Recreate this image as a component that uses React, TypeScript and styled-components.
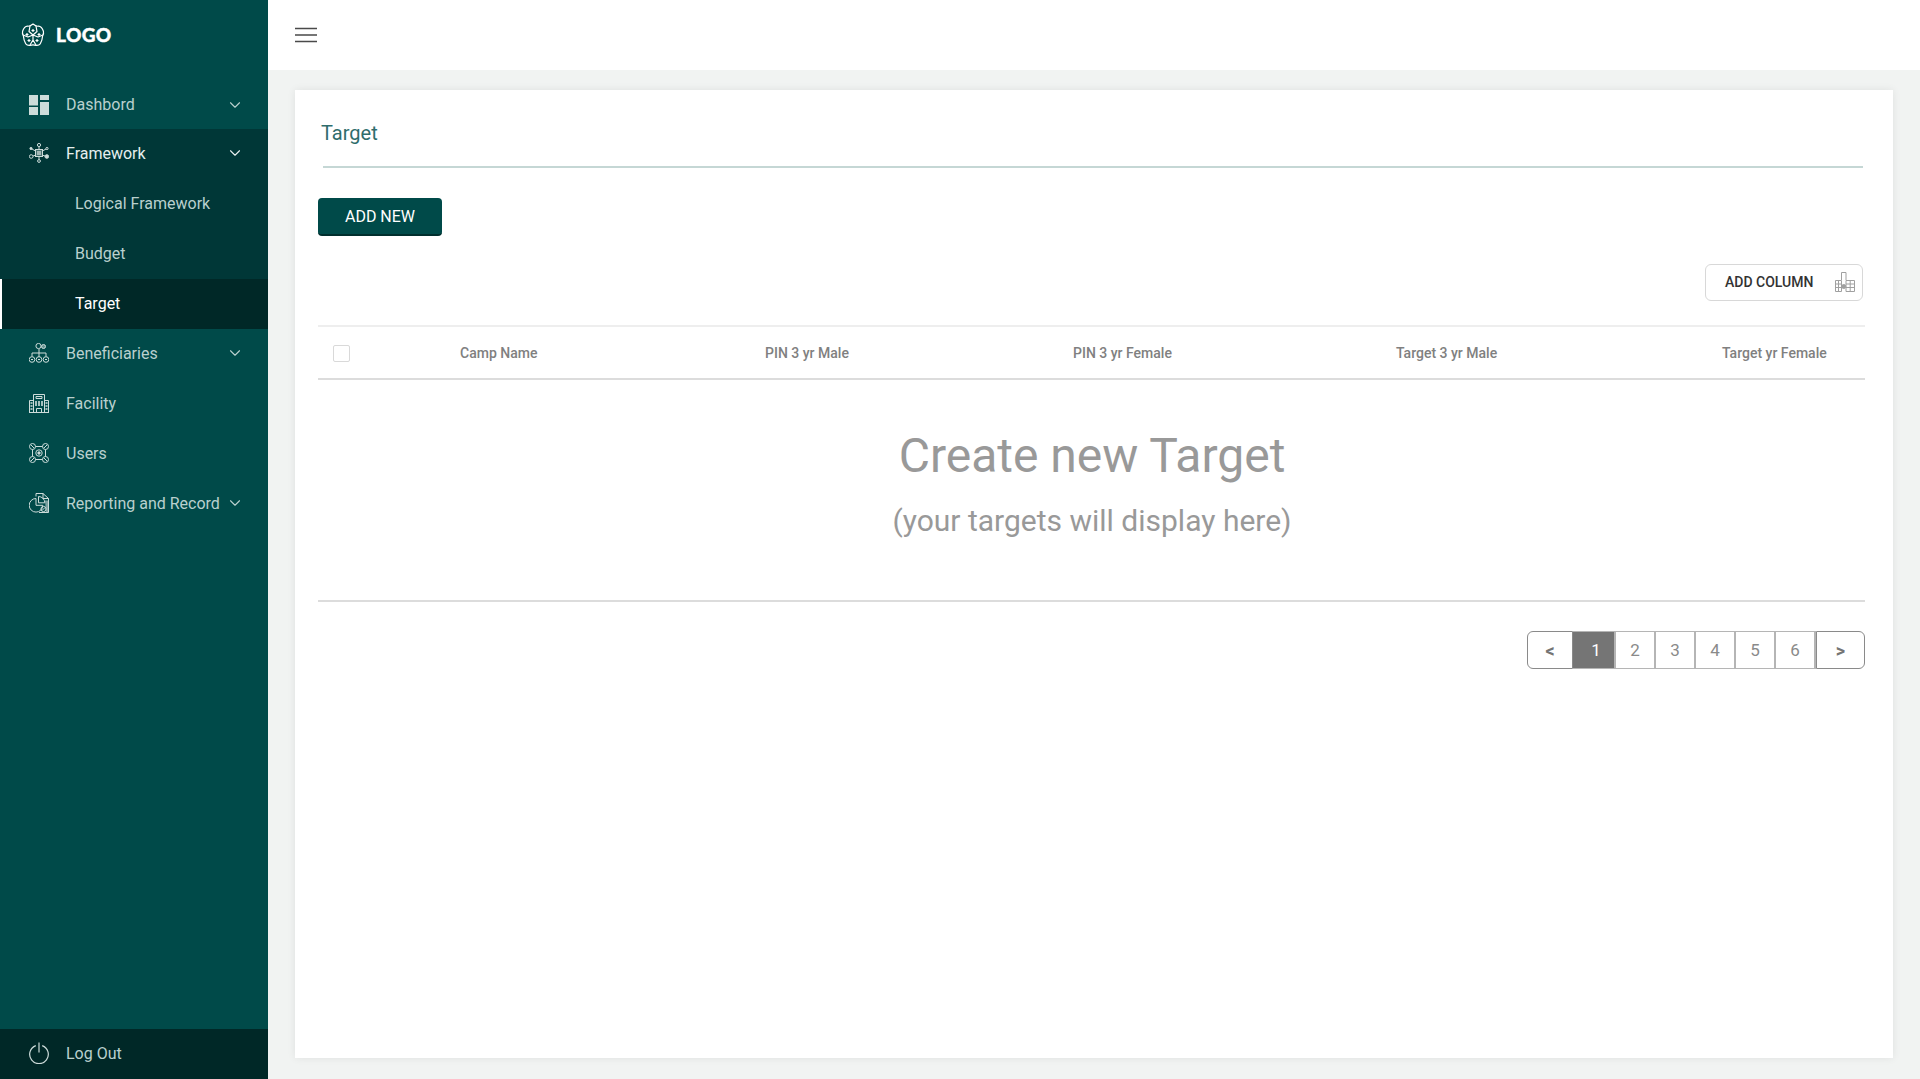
import { ReactNode } from "react";
import styled, { createGlobalStyle } from "styled-components";
import { ChevronDown } from "lucide-react";

const GlobalStyle = createGlobalStyle`
  * {
    box-sizing: border-box;
  }
  html,
  body {
    margin: 0;
    height: 100%;
    background: #f1f3f2;
    font-family: Roboto, "Liberation Sans", sans-serif;
  }
`;

const LogoIcon = () => (
  <svg width="24" height="24" viewBox="0 0 24 24" fill="none" stroke="#fff" strokeWidth="1.2" strokeLinejoin="round">
    <path d="M12 1 Q15 3.6 17.5 3.2 Q20.8 3.4 22.4 8.2 Q23 10.6 21.6 13 Q21.4 16.5 19.4 20.6 Q17.8 22.8 15 22.4 Q12 21.4 9 22.4 Q6.2 22.8 4.6 20.6 Q2.6 16.5 2.4 13 Q1 10.6 1.6 8.2 Q3.2 3.4 6.5 3.2 Q9 3.6 12 1Z" />
    <path d="M12 12 8 8.5 9 3M12 12l4-3.5L15 3M12 12l5 2 5-2M12 12l-5 2-5-2M12 12v5l-3 5M12 17l3 5" />
    <path d="M12 6v3M10.5 7.5h3M6 10v3M4.5 11.5h3M18 10v3M16.5 11.5h3M8 16v3M6.5 17.5h3M16 16v3M14.5 17.5h3" />
  </svg>
);

const HamburgerIcon = () => (
  <svg width="22" height="16" viewBox="0 0 22 16" fill="none" stroke="#4a4a4a" strokeWidth="1.7">
    <path d="M0 1.5h22M0 8h22M0 14.5h22" />
  </svg>
);

const DashboardIcon = () => (
  <svg width="20" height="20" viewBox="0 0 20 20" fill="#cddcda">
    <rect x="0" y="0" width="9" height="10.5" />
    <rect x="0" y="12" width="9" height="8" />
    <rect x="11" y="0" width="9" height="5" />
    <rect x="11" y="7" width="9" height="13" />
  </svg>
);

const FrameworkIcon = () => (
  <svg width="20" height="20" viewBox="0 0 20 20" fill="none" stroke="#cddcda" strokeWidth="1">
    <rect x="6.5" y="6.5" width="7" height="7" fill="#cddcda" fillOpacity=".35" />
    <path d="M8 9h4M8 11h4" strokeWidth="1.2" stroke="#fff" />
    <circle cx="10" cy="2" r="1.6" />
    <circle cx="10" cy="18" r="1.4" />
    <circle cx="2" cy="5.5" r="1.1" fill="#cddcda" />
    <circle cx="18" cy="5.5" r="1.1" />
    <circle cx="2.2" cy="13.5" r="1.8" />
    <circle cx="17.8" cy="13.5" r="1.8" fill="#cddcda" />
    <path d="M10 3.6v3M10 13.5v3M3 6l3.5 2M17 6l-3.5 2M4 13l2.5-.8M16 13l-2.5-.8" />
  </svg>
);

const BeneficiariesIcon = () => (
  <svg width="20" height="20" viewBox="0 0 20 20" fill="none" stroke="#cddcda" strokeWidth="1">
    <circle cx="9.5" cy="3" r="2.6" />
    <circle cx="14.5" cy="3.5" r="2" fill="#cddcda" fillOpacity=".5" />
    <circle cx="3" cy="16.5" r="2.8" />
    <circle cx="10" cy="16.5" r="2.8" />
    <circle cx="17" cy="16.5" r="2.8" />
    <path d="M10 6v8M3 13.5V10h14v3.5M2 16.5h2M9 16.5h2M16 16.5h2" />
  </svg>
);

const FacilityIcon = () => (
  <svg width="20" height="20" viewBox="0 0 20 20" fill="none" stroke="#cddcda" strokeWidth="1">
    <path d="M.5 19.5V7.5h4M19.5 19.5V7.5h-4M4.5 19.5V1.5h11v18M0 19.5h20" />
    <path d="M7 3.5h6v2H7zM7.5 15.5h5v4h-5z" />
    <path d="M7 8v5M10 8v5M13 8v5" strokeWidth="1.6" />
    <path d="M1.5 10h2M1.5 13h2M1.5 16h2M16.5 10h2M16.5 13h2M16.5 16h2" strokeWidth="1.6" />
  </svg>
);

const UsersIcon = () => (
  <svg width="20" height="20" viewBox="0 0 20 20" fill="none" stroke="#cddcda" strokeWidth="1">
    <circle cx="3.5" cy="3.5" r="3" />
    <circle cx="16.5" cy="3.5" r="3" />
    <circle cx="3.5" cy="16.5" r="3" />
    <circle cx="16.5" cy="16.5" r="3" />
    <circle cx="10" cy="10" r="3.2" />
    <circle cx="10" cy="10" r="1.2" fill="#cddcda" />
    <path d="M6.5 3.5h7M6.5 16.5h7M3.5 6.5v7M16.5 6.5v7M2 2l3 3M15 5l3-3M2 18l3-3M15 15l3 3" />
  </svg>
);

const ReportingIcon = () => (
  <svg width="20" height="20" viewBox="0 0 20 20" fill="none" stroke="#cddcda" strokeWidth="1">
    <path d="M7 3.5V.5h7l5.5 5v14H10" />
    <path d="M14 .5v5h5.5" />
    <path d="M16 7.5h3.5v12H17z" fill="#cddcda" fillOpacity=".6" stroke="none" />
    <path d="M7 5.5a6.8 6.8 0 1 0 6.8 6.8H7Z" />
    <path d="M9.5 3.5v6.3h6.3a6.3 6.3 0 0 0-6.3-6.3Z" />
    <circle cx="14.5" cy="16" r="2.6" />
    <path d="M13 17.5l3-3" />
  </svg>
);

const PowerIcon = () => (
  <svg width="20" height="22" viewBox="0 0 20 22" fill="none" stroke="#cddcda" strokeWidth="1.2">
    <path d="M6.8 3.6a9.3 9.3 0 1 0 6.4 0" />
    <path d="M10 0.5v10" />
  </svg>
);

const ColumnIcon = () => (
  <svg width="20" height="20" viewBox="0 0 20 20" fill="none" stroke="#a0a0a0" strokeWidth="1">
    <path d="M.5 8.5h6v11h-6zM.5 12h6M.5 15.5h6M3.5 8.5v11" />
    <path d="M6.5 8V.5h4.5V8" />
    <path d="M11 8.5h8.5v11H11zM11 12h8.5M11 15.5h8.5M15.2 8.5v11" />
    <circle cx="8.7" cy="14.5" r="2" fill="#a0a0a0" />
  </svg>
);

type NavRowProps = {
  icon: ReactNode;
  label: string;
  open?: boolean;
  hasChildren?: boolean;
};

const NavRow = ({ icon, label, open, hasChildren }: NavRowProps) => (
  <Row $open={open}>
    <IconSlot>{icon}</IconSlot>
    <RowLabel>{label}</RowLabel>
    {hasChildren && <ChevronDown size={18} strokeWidth={1.5} />}
  </Row>
);

const columns = ["Camp Name", "PIN 3 yr Male", "PIN 3 yr Female", "Target 3 yr Male", "Target yr Female"];
const pages = [1, 2, 3, 4, 5, 6];

const App = () => {
  return (
    <Page>
      <GlobalStyle />
      <Sidebar>
        <Brand>
          <LogoIcon />
          <BrandName>LOGO</BrandName>
        </Brand>
        <Nav>
          <FirstRow>
            <NavRow icon={<DashboardIcon />} label="Dashbord" hasChildren />
          </FirstRow>
          <Group>
            <NavRow icon={<FrameworkIcon />} label="Framework" hasChildren open />
            <SubItem>Logical Framework</SubItem>
            <SubItem>Budget</SubItem>
            <SubItem $active>Target</SubItem>
          </Group>
          <NavRow icon={<BeneficiariesIcon />} label="Beneficiaries" hasChildren />
          <NavRow icon={<FacilityIcon />} label="Facility" />
          <NavRow icon={<UsersIcon />} label="Users" />
          <NavRow icon={<ReportingIcon />} label="Reporting and Record" hasChildren />
        </Nav>
        <LogOut>
          <IconSlot>
            <PowerIcon />
          </IconSlot>
          <RowLabel>Log Out</RowLabel>
        </LogOut>
      </Sidebar>
      <Main>
        <TopBar>
          <HamburgerIcon />
        </TopBar>
        <Content>
          <Card>
            <Title>Target</Title>
            <AddNew>ADD NEW</AddNew>
            <ColumnBar>
              <AddColumn>
                ADD COLUMN
                <ColumnIcon />
              </AddColumn>
            </ColumnBar>
            <TableHead>
              <Check />
              {columns.map((c) => (
                <HeadCell key={c}>{c}</HeadCell>
              ))}
            </TableHead>
            <Empty>
              <EmptyTitle>Create new Target</EmptyTitle>
              <EmptySub>(your targets will display here)</EmptySub>
            </Empty>
            <Pager>
              <PagerEnd $side="left">&lt;</PagerEnd>
              {pages.map((p) => (
                <PageNum key={p} $active={p === 1}>
                  {p}
                </PageNum>
              ))}
              <PagerEnd $side="right">&gt;</PagerEnd>
            </Pager>
          </Card>
        </Content>
      </Main>
    </Page>
  );
};

export default App;

const Page = styled.div`
  display: flex;
  height: 100vh;
  overflow: hidden;
`;

const Sidebar = styled.aside`
  width: 268px;
  flex-shrink: 0;
  background: #004a49;
  display: flex;
  flex-direction: column;
`;

const Brand = styled.div`
  height: 80px;
  padding: 0 0 11px 21px;
  display: flex;
  align-items: center;
  gap: 11px;
`;

const BrandName = styled.div`
  color: #fff;
  font-family: Lato, Roboto, sans-serif;
  font-weight: 900;
  font-size: 19px;
  letter-spacing: 0.4px;
  -webkit-text-stroke: 0.4px #fff;
`;

const Nav = styled.nav`
  flex: 1;
`;

const Group = styled.div`
  background: #003737;
`;

const Row = styled.div<{ $open?: boolean }>`
  height: 50px;
  padding: 0 24px 2px 29px;
  display: flex;
  align-items: center;
  font-size: 16px;
  color: ${(p) => (p.$open ? "#e6efee" : "#b9d0ce")};

  svg:last-child {
    flex-shrink: 0;
  }
`;

const FirstRow = styled.div`
  ${Row} {
    height: 49px;
    padding-bottom: 0;
  }
`;

const IconSlot = styled.div`
  width: 37px;
  display: flex;
  align-items: center;
`;

const RowLabel = styled.span`
  flex: 1;
`;

const SubItem = styled.div<{ $active?: boolean }>`
  height: 50px;
  padding-left: ${(p) => (p.$active ? "73px" : "75px")};
  padding-bottom: 2px;
  display: flex;
  align-items: center;
  font-size: 16px;
  color: ${(p) => (p.$active ? "#fff" : "#b9d0ce")};
  background: ${(p) => (p.$active ? "#002827" : "transparent")};
  border-left: ${(p) => (p.$active ? "2px solid #fff" : "none")};
`;

const LogOut = styled.div`
  height: 50px;
  padding: 0 26px 2px 29px;
  background: #002827;
  color: #b9d0ce;
  font-size: 16px;
  display: flex;
  align-items: center;
`;

const Main = styled.main`
  flex: 1;
  min-width: 0;
  display: flex;
  flex-direction: column;
`;

const TopBar = styled.header`
  height: 70px;
  background: #fff;
  padding-left: 27px;
  display: flex;
  align-items: center;
`;

const Content = styled.div`
  flex: 1;
  min-height: 0;
  padding: 20px 27px 21px;
  display: flex;
`;

const Card = styled.section`
  flex: 1;
  background: #fff;
  padding: 0 28px 0 23px;
  box-shadow: 0 0 8px rgba(0, 0, 0, 0.08);
`;

const Title = styled.h1`
  margin: 0 2px 0 5px;
  height: 78px;
  padding: 30px 0 0;
  border-bottom: 2px solid #c5d7d5;
  color: #2f6d6c;
  font-size: 20px;
  line-height: 26px;
  font-weight: 400;
  text-indent: -2px;
`;

const AddNew = styled.button`
  display: block;
  margin-top: 30px;
  width: 124px;
  height: 38px;
  padding: 1px 0 0;
  border: none;
  border-bottom: 2px solid #002e2d;
  border-radius: 4px;
  background: #004a49;
  color: #fff;
  font: 400 16px Roboto, sans-serif;
`;

const ColumnBar = styled.div`
  margin-top: 28px;
  padding-right: 2px;
  display: flex;
  justify-content: flex-end;
`;

const AddColumn = styled.button`
  width: 158px;
  height: 37px;
  padding: 0 7px 1px 19px;
  display: flex;
  align-items: center;
  justify-content: space-between;
  border: 1px solid #d8d8d8;
  border-radius: 6px;
  background: #fff;
  color: #333;
  font: 500 14px Roboto, sans-serif;
`;

const TableHead = styled.div`
  margin-top: 24px;
  height: 55px;
  display: grid;
  grid-template-columns: 142px 305px 308px 323px 326px 1fr;
  align-items: center;
  border-top: 2px solid #eeeeee;
  border-bottom: 2px solid #dcdcdc;
`;

const Check = styled.div`
  width: 17px;
  height: 17px;
  margin: 2px 0 0 15px;
  border: 1px solid #d9d9d9;
  border-radius: 2px;
`;

const HeadCell = styled.div`
  color: #808080;
  font-size: 14px;
  font-weight: 500;
`;

const Empty = styled.div`
  height: 222px;
  padding: 48px 0 0 1px;
  border-bottom: 2px solid #dcdcdc;
  text-align: center;
  color: #999;
`;

const EmptyTitle = styled.div`
  font-size: 48px;
  line-height: 56px;
`;

const EmptySub = styled.div`
  margin-top: 17px;
  font-size: 30px;
  line-height: 40px;
`;

const Pager = styled.div`
  margin-top: 29px;
  display: flex;
  justify-content: flex-end;
`;

const PagerEnd = styled.div<{ $side: "left" | "right" }>`
  width: ${(p) => (p.$side === "left" ? "46px" : "49px")};
  height: 38px;
  display: flex;
  align-items: center;
  justify-content: center;
  border: 1px solid #8a8a8a;
  border-radius: ${(p) => (p.$side === "left" ? "6px 0 0 6px" : "0 6px 6px 0")};
  color: #757575;
  font-size: 18px;
  font-weight: 700;
`;

const PageNum = styled.div<{ $active?: boolean }>`
  width: ${(p) => (p.$active ? "43px" : "40px")};
  height: 38px;
  padding-left: ${(p) => (p.$active ? "5px" : "0")};
  display: flex;
  align-items: center;
  justify-content: center;
  border: 1px solid #b5b5b5;
  border-width: 1px 2px 1px 0;
  background: ${(p) => (p.$active ? "#757575" : "#fff")};
  color: ${(p) => (p.$active ? "#fff" : "#8a8a8a")};
  font-size: 17px;
`;
